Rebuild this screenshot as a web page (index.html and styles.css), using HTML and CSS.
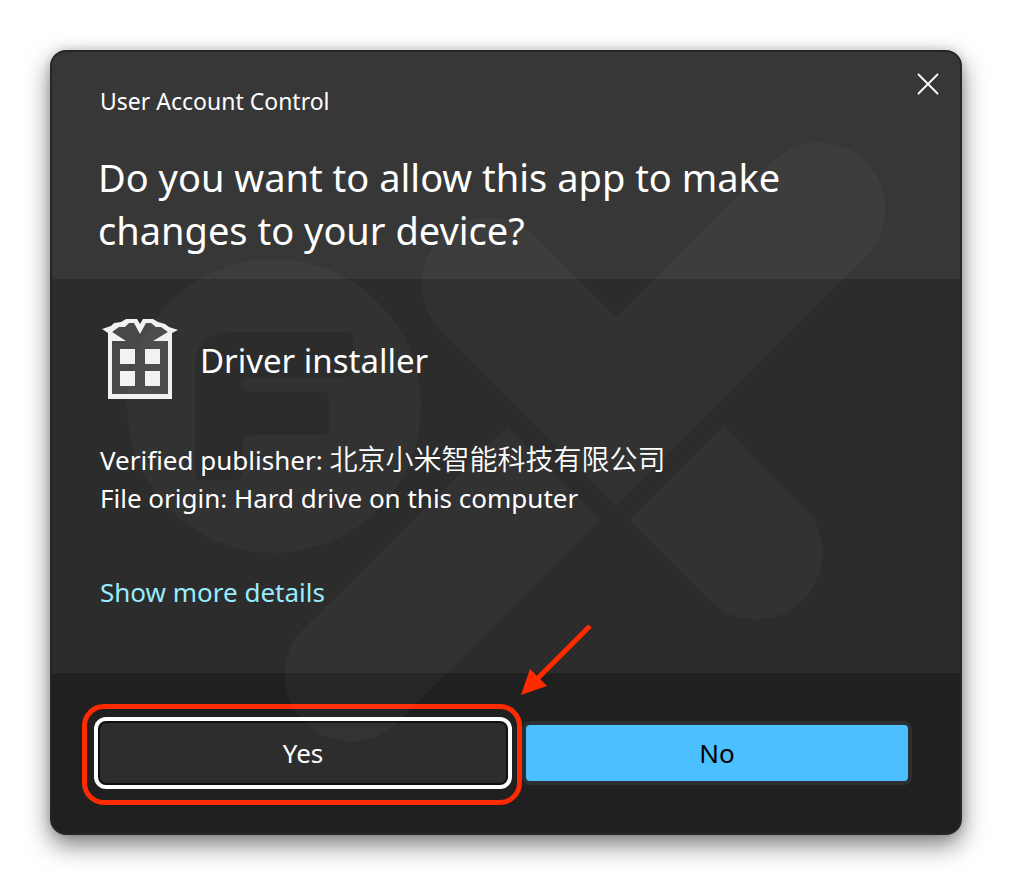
FILE: index.html
```html
<!DOCTYPE html>
<html lang="en">
<head>
<meta charset="utf-8">
<meta name="viewport" content="width=device-width, initial-scale=1">
<title>User Account Control</title>
<link rel="stylesheet" href="styles.css">
</head>
<body>
<main class="dialog" role="dialog" aria-labelledby="question">
  <header class="header">
    <div class="titlebar">
      <span class="title">User Account Control</span>
      <button class="close" type="button" aria-label="Close">
        <svg width="22" height="22" viewBox="0 0 22 22" aria-hidden="true"><path d="M1.5 1.5 20.5 20.5M20.5 1.5 1.5 20.5" stroke="#fff" stroke-width="1.8" stroke-linecap="round"/></svg>
      </button>
    </div>
    <h1 class="question" id="question">Do you want to allow this app to make changes to your device?</h1>
  </header>
  <section class="body">
    <div class="app">
      <svg class="app-icon" width="80" height="80" viewBox="0 0 80 80" aria-hidden="true">
        <path fill="#f2f2f2" d="M2 10 11 7 14 4 21 3 26 0H37L40 5 43 0H53L58 3 65 5 69 8 78 11 72 14V80H8V14Z"/>
        <path fill="#484848" d="M12 22H24L12 13 19 8 25 8 29 4 34 4 40 15 46 4 51 4 56 8 61 8 68 13 55 22H68V75H12Z"/>
        <path fill="#f2f2f2" d="M12 13 26 22H12ZM68 13 53 22H68Z"/>
        <path fill="#f2f2f2" d="M20 30H35V45H20ZM45 30H60V45H45ZM20 52H35V67H20ZM45 52H60V67H45Z"/>
      </svg>
      <h2 class="app-name">Driver installer</h2>
    </div>
    <div class="details">
      <p class="detail">Verified publisher: <span lang="zh-CN">北京小米智能科技有限公司</span></p>
      <p class="detail">File origin: Hard drive on this computer</p>
    </div>
    <a class="more" href="#">Show more details</a>
  </section>
  <footer class="footer">
    <div class="choice">
      <button class="btn btn-yes" type="button">Yes</button>
      <span class="highlight"></span>
      <svg class="arrow" width="72" height="72" viewBox="0 0 72 72" aria-hidden="true"><path d="M70 1 18 53" stroke="#ff2b00" stroke-width="5"/><path d="M1 70 10 44 27 61Z" fill="#ff2b00"/></svg>
    </div>
    <button class="btn btn-no" type="button">No</button>
  </footer>
  <svg class="watermark" width="908" height="781" viewBox="52 52 908 781" aria-hidden="true">
    <path fill="#fff" fill-opacity=".03" fill-rule="evenodd" d="M274 259a147 147 0 1 1 0 294a147 147 0 1 1 0-294ZM231 332H347Q353 332 353 338V371Q353 377 347 377H250A7 7 0 0 0 250 392H322Q329 392 329 399V428Q329 435 322 435H250Q243 435 243 442V472Q243 480 235 480H201Q195 480 195 474V368Q195 332 231 332Z"/>
    <path fill="#fff" fill-opacity=".03" d="M535 237 616 317 772 162A66 66 0 0 1 866 256L616 506 441 331A66 66 0 0 1 535 237ZM507 427 601 520 398 722A66 66 0 0 1 304 628ZM724 426 803 506A66 66 0 0 1 709 600L629 520Z"/>
  </svg>
</main>
</body>
</html>
```
FILE: styles.css
```css
* {
  box-sizing: border-box;
}

body {
  margin: 0;
  padding: 50px;
  background: #fff;
  color: #fff;
  font-family: "Noto Sans", "Noto Sans CJK SC", sans-serif;
}

.dialog {
  position: relative;
  overflow-wrap: break-word;
  border: 2px solid #262626;
  border-radius: 16px;
  background: #2c2c2c;
  box-shadow: 0 10px 24px rgba(0, 0, 0, 0.5), 0 0 10px rgba(0, 0, 0, 0.15);
}

.header {
  padding: 0 10px 22px 46px;
  border-radius: 14px 14px 0 0;
  background: #373737;
}

.titlebar {
  display: flex;
  align-items: flex-end;
  justify-content: space-between;
  height: 65px;
  padding-left: 2px;
}

.title {
  font-size: 23px;
  line-height: 32px;
}

.close {
  display: grid;
  place-items: center;
  align-self: flex-start;
  width: 44px;
  height: 44px;
  margin-top: 10px;
  padding: 0;
  border: 0;
  background: none;
}

.question {
  max-width: 740px;
  margin: 34px 0 0;
  font-size: 38px;
  font-weight: 400;
  line-height: 53px;
}

.body {
  padding: 40px 48px 62px;
}

.app {
  display: flex;
  align-items: center;
  gap: 20px;
}

.app-name {
  margin: 0;
  padding-top: 4px;
  font-size: 33px;
  font-weight: 400;
  line-height: 48px;
}

.details {
  margin-top: 42px;
}

.detail {
  margin: 0;
  font-size: 26px;
  line-height: 38px;
}

.detail span {
  font-family: "Noto Sans CJK SC", sans-serif;
  font-size: 28px;
  font-weight: 350;
  line-height: 1;
}

.more {
  display: block;
  width: fit-content;
  margin-top: 56px;
  color: #99ebff;
  font-size: 26px;
  line-height: 38px;
  text-decoration: none;
}

.footer {
  display: grid;
  grid-template-columns: 410fr 390fr;
  gap: 14px;
  padding: 48px 48px 48px 46px;
  border-radius: 0 0 14px 14px;
  background: #202020;
}

.choice {
  position: relative;
}

.btn {
  width: 100%;
  height: 64px;
  padding: 0;
  font-family: inherit;
  font-size: 26px;
  line-height: 36px;
}

.btn-yes {
  display: block;
  border: 2px solid #101010;
  border-radius: 8px;
  background: #2d2d2d;
  box-shadow: 0 0 0 4px #fff;
  color: #fff;
}

.btn-no {
  border: 4px solid #2d3032;
  border-radius: 8px;
  background: #4cbfff;
  color: #000;
}

.highlight {
  position: absolute;
  inset: -17px -14px -20px -16px;
  border: 5px solid #ff2b00;
  border-radius: 22px;
  pointer-events: none;
}

.arrow {
  position: absolute;
  right: -84px;
  bottom: 88px;
  pointer-events: none;
}

.watermark {
  position: absolute;
  top: 0;
  left: 0;
  max-width: 100%;
  pointer-events: none;
}
```
